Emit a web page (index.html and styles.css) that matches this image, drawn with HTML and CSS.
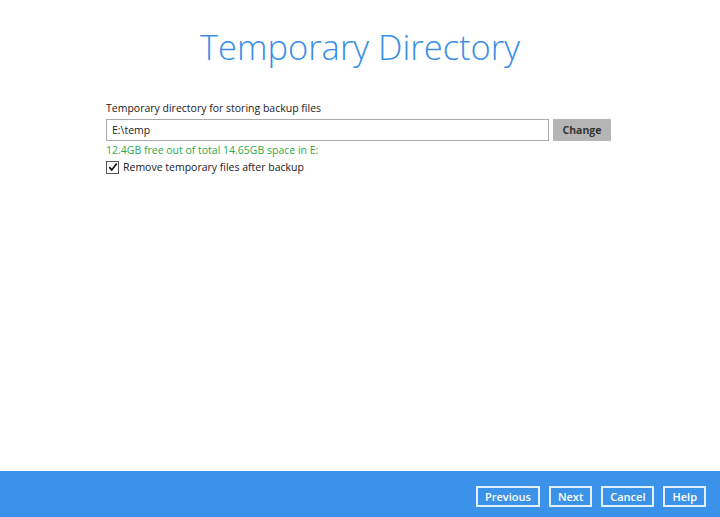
FILE: index.html
```html
<!DOCTYPE html>
<html lang="en">
<head>
    <meta charset="UTF-8">
    <title>Temporary Directory</title>
    <link rel="stylesheet" href="styles.css">
</head>
<body>
    <div class="page">
        <h1 class="title">Temporary Directory</h1>

        <div class="content">
            <label class="field-label" for="tempDir">Temporary directory for storing backup files</label>
            <div class="path-row">
                <input type="text" id="tempDir" class="path-input" value="E:\temp">
                <button class="btn-change">Change</button>
            </div>
            <div class="space-info">12.4GB free out of total 14.65GB space in E:</div>
            <label class="check-row">
                <span class="check-box">
                    <svg viewBox="0 0 12 12" width="10" height="10">
                        <path d="M1.5 6.2 L4.5 9.5 L10.5 1.8" fill="none" stroke="#111" stroke-width="2"/>
                    </svg>
                </span>
                Remove temporary files after backup
            </label>
        </div>
    </div>

    <!-- Footer buttons -->
    <div class="footer">
        <button class="btn-footer">Previous</button>
        <button class="btn-footer">Next</button>
        <button class="btn-footer">Cancel</button>
        <button class="btn-footer">Help</button>
    </div>
</body>
</html>
```

FILE: styles.css
```css
/* --- General --- */
html, body {
    margin: 0;
    padding: 0;
    height: 100%;
}

body {
    font-family: "Open Sans", "Noto Sans", sans-serif;
    background-color: #fff;
    color: #222;
    display: flex;
    flex-direction: column;
}

.page {
    flex: 1;
}

.title {
    margin: 25px 0 0;
    text-align: center;
    font-weight: 300;
    font-size: 34.5px;
    line-height: 44px;
    color: #3a8ee6;
}

/* --- Form area --- */
.content {
    margin: 31px 0 0 106px;
    width: 505px;
    font-size: 10.5px;
}

.field-label {
    display: block;
    line-height: 16px;
}

.path-row {
    display: flex;
    gap: 4px;
    margin-top: 3px;
}

.path-input {
    flex: 1;
    height: 22px;
    box-sizing: border-box;
    border: 1px solid #aaa;
    padding: 0 5px;
    font-family: inherit;
    font-size: 10.5px;
    color: #222;
    outline: none;
}

.btn-change {
    width: 58px;
    height: 22px;
    border: none;
    background-color: #b5b5b5;
    font-family: inherit;
    font-size: 10.5px;
    font-weight: 700;
    color: #333;
    padding: 0;
}

.space-info {
    margin-top: 1px;
    line-height: 16px;
    color: #2eaa4a;
}

.check-row {
    display: flex;
    align-items: center;
    gap: 4px;
    line-height: 16px;
    margin-top: 1px;
}

.check-box {
    width: 11px;
    height: 11px;
    border: 1px solid #555;
    display: flex;
    align-items: center;
    justify-content: center;
}

/* --- Footer --- */
.footer {
    height: 46px;
    background-color: #3a93e8;
    display: flex;
    justify-content: flex-end;
    align-items: center;
    gap: 9px;
    padding: 0 14px 0 0;
}

.btn-footer {
    height: 21px;
    padding: 0 7px;
    background: transparent;
    border: 2px solid #e3effc;
    color: #fff;
    font-family: inherit;
    font-size: 11px;
    font-weight: 600;
    margin-top: 4px;
}
```
